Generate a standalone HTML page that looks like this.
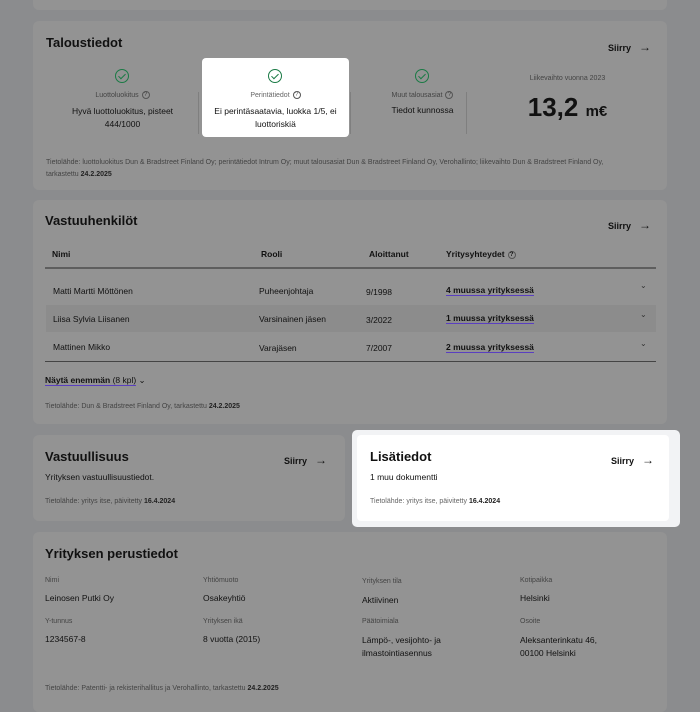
<!DOCTYPE html>
<html><head><meta charset="utf-8"><style>
*{box-sizing:border-box;margin:0;padding:0}
body{width:700px;height:700px;overflow:hidden;background:#8b8c8e;font-family:"Liberation Sans",sans-serif;color:#111;position:relative}
.card{position:absolute;background:#939393;border-radius:6px}
.abs{position:absolute;white-space:nowrap}
h2{position:absolute;font-size:13px;font-weight:bold;color:#111}
.siirry{position:absolute;font-size:9px;font-weight:bold}
.siirry span{font-size:12px;margin-left:8px;font-weight:normal}
.src{position:absolute;font-size:7px;color:#444}
.src b{color:#222}
.lbl{font-size:7px;color:#444}
.val{font-size:8.5px;color:#111}
.chk{position:absolute;width:14px;height:14px;border:1.6px solid #1a7a45;border-radius:50%}
.chk::after{content:"";position:absolute;left:3.5px;top:1.5px;width:3px;height:6px;border:solid #1a7a45;border-width:0 1.6px 1.6px 0;transform:rotate(45deg)}
.q{display:inline-block;width:8px;height:8px;border:1px solid #555;border-radius:50%;font-size:6px;text-align:center;line-height:6px;vertical-align:middle;margin-left:3px}
.u{border-bottom:1px solid #5a3fc0;font-weight:bold}
</style></head><body>
<div class="card" style="left:33px;top:-10px;width:634px;height:20px"></div>

<div class="card" style="left:33px;top:21px;width:634px;height:169px"></div>
<h2 style="left:46px;top:35px">Taloustiedot</h2>
<div class="siirry" style="left:608px;top:40px">Siirry<span>→</span></div>
<div class="abs" style="left:198px;top:92px;width:1px;height:42px;background:#7f7f7f"></div>
<div class="abs" style="left:350px;top:92px;width:1px;height:42px;background:#7f7f7f"></div>
<div class="abs" style="left:466px;top:92px;width:1px;height:42px;background:#7f7f7f"></div>
<div class="chk" style="left:115px;top:69px"></div>
<div class="abs lbl" style="left:60px;top:91px;width:125px;text-align:center">Luottoluokitus<span class="q">?</span></div>
<div class="abs val" style="left:60px;top:105px;width:125px;text-align:center;white-space:normal;line-height:13px">Hyvä luottoluokitus, pisteet 444/1000</div>
<div class="abs" style="left:202px;top:58px;width:147px;height:79px;background:#fff;border-radius:4px"></div>
<div class="chk" style="left:268px;top:69px"></div>
<div class="abs lbl" style="left:202px;top:91px;width:147px;text-align:center;color:#666">Perintätiedot<span class="q">?</span></div>
<div class="abs val" style="left:208px;top:105px;width:135px;text-align:center;white-space:normal;line-height:13px">Ei perintäsaatavia, luokka 1/5, ei luottoriskiä</div>
<div class="chk" style="left:415px;top:69px"></div>
<div class="abs lbl" style="left:360px;top:91px;width:125px;text-align:center">Muut talousasiat<span class="q">?</span></div>
<div class="abs val" style="left:360px;top:105px;width:125px;text-align:center">Tiedot kunnossa</div>
<div class="abs lbl" style="left:500px;top:75px;width:135px;text-align:center">Liikevaihto vuonna 2023</div>
<div class="abs" style="left:500px;top:92px;width:135px;text-align:center;font-size:26px;font-weight:bold">13,2 <span style="font-size:15px">m€</span></div>
<div class="src" style="left:46px;top:157px;line-height:12px">Tietolähde: luottoluokitus Dun &amp; Bradstreet Finland Oy; perintätiedot Intrum Oy; muut talousasiat Dun &amp; Bradstreet Finland Oy, Verohallinto; liikevaihto Dun &amp; Bradstreet Finland Oy,<br>tarkastettu <b>24.2.2025</b></div>

<div class="card" style="left:33px;top:200px;width:634px;height:224px"></div>
<h2 style="left:45px;top:213px">Vastuuhenkilöt</h2>
<div class="siirry" style="left:608px;top:218px">Siirry<span>→</span></div>
<div class="abs val" style="left:52px;top:249px;font-weight:bold">Nimi</div>
<div class="abs val" style="left:261px;top:249px;font-weight:bold">Rooli</div>
<div class="abs val" style="left:369px;top:249px;font-weight:bold">Aloittanut</div>
<div class="abs val" style="left:446px;top:249px;font-weight:bold">Yritysyhteydet<span class="q">?</span></div>
<div class="abs" style="left:45px;top:267px;width:611px;height:2px;background:#5e5e5e"></div>
<div class="abs" style="left:46px;top:305px;width:610px;height:27px;background:#8c8c8c"></div>
<div class="abs val" style="left:53px;top:286px">Matti Martti Möttönen</div>
<div class="abs val" style="left:259px;top:286px">Puheenjohtaja</div>
<div class="abs val" style="left:366px;top:287px">9/1998</div>
<div class="abs val u" style="left:446px;top:285px">4 muussa yrityksessä</div>
<div class="abs val" style="left:53px;top:314px">Liisa Sylvia Liisanen</div>
<div class="abs val" style="left:259px;top:314px">Varsinainen jäsen</div>
<div class="abs val" style="left:366px;top:315px">3/2022</div>
<div class="abs val u" style="left:446px;top:313px">1 muussa yrityksessä</div>
<div class="abs val" style="left:53px;top:342px">Mattinen Mikko</div>
<div class="abs val" style="left:259px;top:343px">Varajäsen</div>
<div class="abs val" style="left:366px;top:343px">7/2007</div>
<div class="abs val u" style="left:446px;top:342px">2 muussa yrityksessä</div>
<div class="abs" style="left:640px;top:281px;font-size:8px;color:#333">⌄</div>
<div class="abs" style="left:640px;top:310px;font-size:8px;color:#333">⌄</div>
<div class="abs" style="left:640px;top:339px;font-size:8px;color:#333">⌄</div>
<div class="abs" style="left:45px;top:361px;width:611px;height:1px;background:#444"></div>
<div class="abs val" style="left:45px;top:375px"><span style="border-bottom:1px solid #5a3fc0"><b>Näytä enemmän</b> (8 kpl)</span> ⌄</div>
<div class="src" style="left:45px;top:403px">Tietolähde: Dun &amp; Bradstreet Finland Oy, tarkastettu <b>24.2.2025</b></div>

<div class="card" style="left:33px;top:435px;width:312px;height:86px"></div>
<h2 style="left:45px;top:449px">Vastuullisuus</h2>
<div class="siirry" style="left:284px;top:453px">Siirry<span>→</span></div>
<div class="abs val" style="left:45px;top:472px">Yrityksen vastuullisuustiedot.</div>
<div class="src" style="left:45px;top:498px">Tietolähde: yritys itse, päivitetty <b>16.4.2024</b></div>

<div class="abs" style="left:352px;top:430px;width:328px;height:97px;background:#f2f3f5;border-radius:5px"></div>
<div class="abs" style="left:357px;top:435px;width:312px;height:86px;background:#fff;border-radius:4px"></div>
<h2 style="left:370px;top:449px">Lisätiedot</h2>
<div class="siirry" style="left:611px;top:453px">Siirry<span>→</span></div>
<div class="abs val" style="left:370px;top:472px">1 muu dokumentti</div>
<div class="src" style="left:370px;top:498px;color:#666">Tietolähde: yritys itse, päivitetty <b>16.4.2024</b></div>

<div class="card" style="left:33px;top:532px;width:634px;height:180px"></div>
<h2 style="left:45px;top:546px">Yrityksen perustiedot</h2>
<div class="abs lbl" style="left:45px;top:577px">Nimi</div><div class="abs val" style="left:45px;top:593px">Leinosen Putki Oy</div>
<div class="abs lbl" style="left:203px;top:577px">Yhtiömuoto</div><div class="abs val" style="left:203px;top:593px">Osakeyhtiö</div>
<div class="abs lbl" style="left:362px;top:578px">Yrityksen tila</div><div class="abs val" style="left:362px;top:595px">Aktiivinen</div>
<div class="abs lbl" style="left:520px;top:577px">Kotipaikka</div><div class="abs val" style="left:520px;top:593px">Helsinki</div>
<div class="abs lbl" style="left:45px;top:618px">Y-tunnus</div><div class="abs val" style="left:45px;top:634px">1234567-8</div>
<div class="abs lbl" style="left:203px;top:618px">Yrityksen ikä</div><div class="abs val" style="left:203px;top:634px">8 vuotta (2015)</div>
<div class="abs lbl" style="left:362px;top:618px">Päätoimiala</div><div class="abs val" style="left:362px;top:634px;line-height:13px">Lämpö-, vesijohto- ja<br>ilmastointiasennus</div>
<div class="abs lbl" style="left:520px;top:618px">Osoite</div><div class="abs val" style="left:520px;top:634px;line-height:13px">Aleksanterinkatu 46,<br>00100 Helsinki</div>
<div class="src" style="left:45px;top:685px">Tietolähde: Patentti- ja rekisterihallitus ja Verohallinto, tarkastettu <b>24.2.2025</b></div>
</body></html>
